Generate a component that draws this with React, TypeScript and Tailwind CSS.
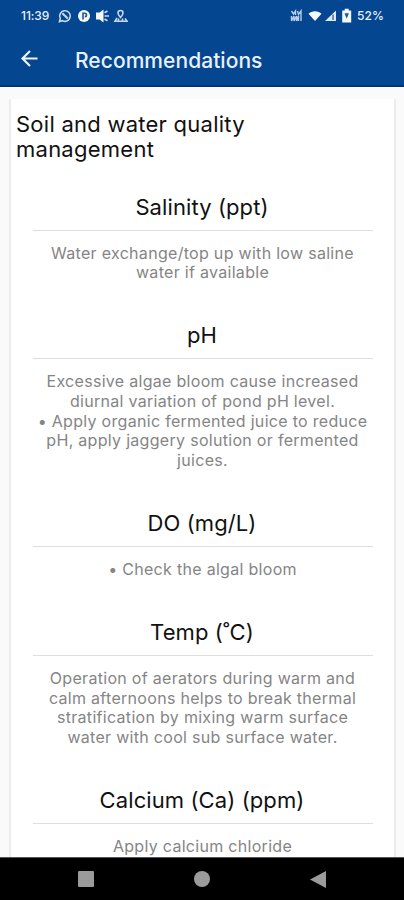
import React from "react";

interface Recommendation {
  title: string;
  lines: string[];
}

const recommendations: Recommendation[] = [
  {
    title: "Salinity (ppt)",
    lines: ["Water exchange/top up with low saline", "water if available"],
  },
  {
    title: "pH",
    lines: [
      "Excessive algae bloom cause increased",
      "diurnal variation of pond pH level.",
      "• Apply organic fermented juice to reduce",
      "pH, apply jaggery solution or fermented",
      "juices.",
    ],
  },
  {
    title: "DO (mg/L)",
    lines: ["• Check the algal bloom"],
  },
  {
    title: "Temp (˚C)",
    lines: [
      "Operation of aerators during warm and",
      "calm afternoons helps to break thermal",
      "stratification by mixing warm surface",
      "water with cool sub surface water.",
    ],
  },
  {
    title: "Calcium (Ca) (ppm)",
    lines: ["Apply calcium chloride"],
  },
];

const StatusBar: React.FC = () => {
  return (
    <div className="flex h-[31px] items-center justify-between pl-[21px] pr-[20px] text-[12px] font-medium text-[#e6effb]">
      <div className="flex items-center">
        <span className="w-[37px] tracking-[-0.1px]">11:39</span>
        <svg className="h-[14px] w-[70px]" viewBox="0 0 70 14" fill="none">
          {/* whatsapp */}
          <path
            d="M1.500 12.500l.8-3a5.300 5.300 0 1 1 2.200 2.200z"
            stroke="#c5d8ee"
            strokeWidth="1.600"
          />
          <path
            d="M4.300 4.200l5.500 5.300"
            stroke="#c5d8ee"
            strokeWidth="2.200"
          />
          {/* parking */}
          <circle cx="26" cy="7" r="6" fill="#f4f8fd" />
          <path
            d="M25 10.500V4.200h1.800a1.700 1.700 0 0 1 0 3.400"
            stroke="#1f5799"
            strokeWidth="1.600"
          />
          {/* speaker */}
          <path d="M38 3.500h3.500l4-3v13l-4-3H38z" fill="#f4f8fd" />
          <path
            d="M46.500 3.800l3-1.800M46.500 7h4.500M46.500 10l3 1.800"
            stroke="#c5d8ee"
            strokeWidth="1.700"
          />
          {/* location over a map */}
          <path
            d="M62.500 8.500c-1.800-2-2.500-3.200-2.500-4.500a2.500 2.500 0 0 1 5 0c0 1.300-.7 2.500-2.500 4.500z"
            stroke="#c5d8ee"
            strokeWidth="1.600"
          />
          <path
            d="M59 9l-2 3.200h12L67 9.500M60.500 12V9.500M64.500 12V9.500"
            stroke="#c5d8ee"
            strokeWidth="1.600"
          />
        </svg>
      </div>
      <div className="flex items-center">
        <svg className="h-[16px] w-[64px]" viewBox="0 0 64 16" fill="none">
          {/* vowifi */}
          <path
            d="M3.500 3l2 3 2-3v4M9.500 3l1 3.500L13 3v10M3.500 8v5l2.500-5v5l2.500-5v5l2-5v5"
            stroke="#b8cee8"
            strokeWidth="1.400"
          />
          {/* wifi */}
          <path
            d="M20.500 5.800C23.500 2.300 30.500 2.300 33.500 5.800L27 13z"
            fill="#f4f8fd"
          />
          {/* signal */}
          <path d="M37 13L48 2.500V13z" fill="#dce8f6" />
          <path d="M45 6.500V12" stroke="#1f5799" strokeWidth="1.200" />
          {/* battery */}
          <path
            d="M54.200 2.500h2.500V.8h4v1.700h2.500V14.500h-9z"
            fill="#f4f8fd"
          />
          <path d="M56.500 5.200h4.400l-2.200 5.600z" fill="#1f5799" />
        </svg>
        <span className="ml-[5px] tracking-[0.1px]">52%</span>
      </div>
    </div>
  );
};

const Header: React.FC = () => {
  return (
    <div className="h-[87px] shrink-0 border-b-2 border-[#02317f] bg-[#04468f]">
      <StatusBar />
      <div className="flex h-[56px] items-center pl-[21px]">
        <svg
          className="h-[18px] w-[18px]"
          viewBox="0 0 18 18"
          fill="none"
          stroke="#eef4fc"
          strokeWidth="2.200"
        >
          <path d="M16.500 8.500H2M9 1L1.500 8.500 9 16" />
        </svg>
        <h1 className="ml-[36px] pt-[3px] text-[21px] font-medium tracking-[0.050px] text-[#e9f1fb]">
          Recommendations
        </h1>
      </div>
    </div>
  );
};

const NavigationBar: React.FC = () => {
  return (
    <div className="flex h-[43px] shrink-0 items-center justify-between border-t border-[#555555] bg-black pl-[78px] pr-[78px]">
      <span className="h-4 w-4 rounded-[1px] bg-[#9b9b9b]" />
      <span className="h-4 w-4 rounded-full bg-[#9b9b9b]" />
      <svg className="h-[17px] w-[16px]" viewBox="0 0 16 17" fill="#9b9b9b">
        <path d="M0 8.500L16 0v17z" />
      </svg>
    </div>
  );
};

const App: React.FC = () => {
  return (
    <div className="flex h-[900px] w-[404px] flex-col overflow-hidden bg-[#fafafa] font-['Inter',sans-serif]">
      <Header />
      <div className="min-h-0 flex-1 overflow-hidden pl-[9px] pr-[8px] pt-3">
        <div className="h-[900px] border-x-2 border-[#ececec] bg-white">
          <h2 className="pl-[5px] pt-[13px] text-[22px] leading-[25px] tracking-[0.250px] text-[#111111]">
            Soil and water quality
            <br />
            management
          </h2>
          <div className="pl-[22px] pr-[21px] pt-[25.500px]">
            {recommendations.map((item) => (
              <section key={item.title} className="pb-[33.300px] text-center">
                <h3 className="h-[43px] border-b border-[#dedede] pr-[2px] pt-[6px] text-[22px] leading-[26px] tracking-[0.100px] text-[#111111]">
                  {item.title}
                </h3>
                <p className="whitespace-pre pr-px pt-[13px] text-[16px] leading-[19.700px] tracking-[0.300px] text-[#858585]">
                  {item.lines.join("\n")}
                </p>
              </section>
            ))}
          </div>
        </div>
      </div>
      <NavigationBar />
    </div>
  );
};

export default App;
